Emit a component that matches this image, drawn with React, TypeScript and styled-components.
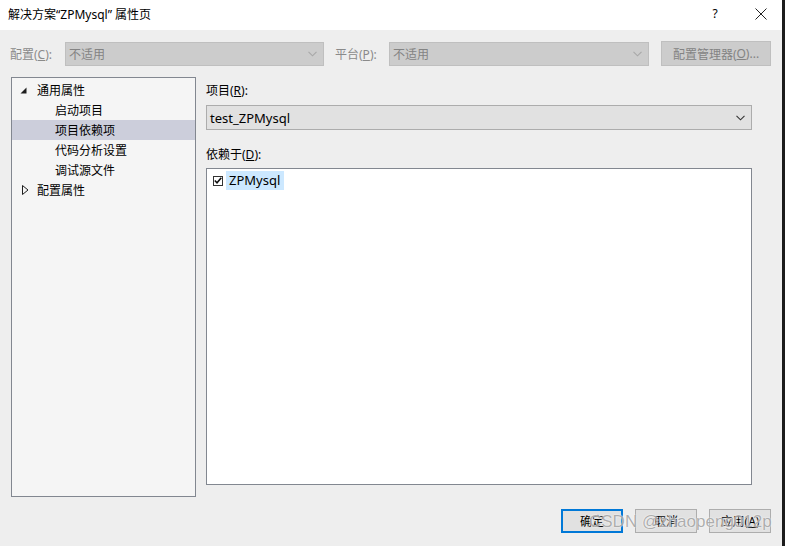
import React from "react";
import styled, { createGlobalStyle } from "styled-components";

const GlobalStyle = createGlobalStyle`
  html, body {
    margin: 0;
    padding: 0;
    background: #eeeeee;
  }
  body {
    font-family: "Noto Sans", "Noto Sans CJK SC", sans-serif;
    font-size: 12px;
    color: #000;
  }
`;

const Window = styled.div`
  position: relative;
  width: 782px;
  height: 546px;
  border-right: 3px solid #1c1c1c;
  display: flex;
  flex-direction: column;
  background: #eeeeee;
  overflow: hidden;
`;

const TitleBar = styled.div`
  height: 30px;
  background: #ffffff;
  display: flex;
  align-items: center;
  padding-left: 8px;
  font-size: 12px;
`;

const TitleText = styled.div`
  flex: 1;
  margin-top: -3px;
`;

const TitleButton = styled.div<{ $w: number; $mr?: number }>`
  width: ${(p) => p.$w}px;
  margin-right: ${(p) => p.$mr ?? 0}px;
  height: 30px;
  display: flex;
  align-items: center;
  justify-content: center;
  margin-top: -3px;
`;

const ConfigRow = styled.div`
  display: flex;
  align-items: center;
  height: 25px;
  margin-top: 11px;
  padding-left: 10px;
`;

const DisabledLabel = styled.span<{ $w: number }>`
  width: ${(p) => p.$w}px;
  color: #8a8a8a;
  font-size: 12px;
`;

const DisabledCombo = styled.div<{ $w: number; $mr: number }>`
  box-sizing: border-box;
  width: ${(p) => p.$w}px;
  margin-right: ${(p) => p.$mr}px;
  height: 24px;
  background: #cccccc;
  border: 1px solid #bfbfbf;
  display: flex;
  align-items: center;
  padding: 0 6px 0 3px;
  color: #838383;
  justify-content: space-between;
`;

const DisabledButton = styled.div`
  box-sizing: border-box;
  width: 110px;
  height: 25px;
  background: #cccccc;
  border: 1px solid #bfbfbf;
  color: #838383;
  display: flex;
  align-items: center;
  justify-content: center;
`;

const Main = styled.div`
  display: flex;
  margin-top: 11px;
  padding-left: 11px;
  gap: 10px;
`;

const TreePanel = styled.div`
  box-sizing: border-box;
  width: 185px;
  height: 420px;
  background: #f5f5f5;
  border: 1px solid #828790;
  padding-top: 2px;
`;

const TreeRow = styled.div<{ $level: number; $selected?: boolean }>`
  height: 20px;
  display: flex;
  align-items: center;
  padding-left: ${(p) => (p.$level === 0 ? 8 : 43)}px;
  background: ${(p) => (p.$selected ? "#cccedb" : "transparent")};
`;

const Expander = styled.span`
  width: 16px;
  display: flex;
  align-items: center;
  margin-right: 1px;
`;

const RightColumn = styled.div`
  width: 546px;
  display: flex;
  flex-direction: column;
`;

const FieldLabel = styled.div<{ $mt: number }>`
  margin-top: ${(p) => p.$mt}px;
  height: 16px;
  line-height: 16px;
`;

const Combo = styled.div`
  box-sizing: border-box;
  height: 25px;
  margin-top: 6px;
  background: #e1e1e1;
  border: 1px solid #acacac;
  display: flex;
  align-items: center;
  justify-content: space-between;
  padding: 0 6px 0 3px;
`;

const ComboValue = styled.span`
  font-size: 13px;
`;

const ListBox = styled.div`
  box-sizing: border-box;
  margin-top: 5px;
  height: 317px;
  background: #ffffff;
  border: 1px solid #828790;
  padding: 2px 0 0 6px;
`;

const ListItem = styled.div`
  display: flex;
  align-items: center;
  height: 19px;
`;

const CheckBox = styled.span`
  box-sizing: border-box;
  width: 10px;
  height: 10px;
  border: 1px solid #333333;
  background: #fff;
  display: flex;
  align-items: center;
  justify-content: center;
  margin-right: 3px;
`;

const ItemText = styled.span`
  background: #cce8ff;
  height: 19px;
  line-height: 19px;
  padding: 0 4px 0 3px;
  font-size: 13px;
`;

const Footer = styled.div`
  display: flex;
  justify-content: flex-end;
  gap: 12px;
  padding-right: 11px;
  margin-top: 12px;
`;

const DialogButton = styled.div<{ $default?: boolean }>`
  box-sizing: border-box;
  width: 62px;
  height: 24px;
  background: #e1e1e1;
  border: ${(p) => (p.$default ? "2px solid #0078d7" : "1px solid #adadad")};
  display: flex;
  align-items: center;
  justify-content: center;
`;

const Watermark = styled.div`
  position: absolute;
  left: 589px;
  top: 512px;
  font-family: "Liberation Sans", sans-serif;
  font-size: 17px;
  color: rgba(120, 120, 120, 0.6);
  text-shadow: 0 0 1px rgba(255, 255, 255, 0.9), 0 0 2px rgba(255, 255, 255, 0.7);
  pointer-events: none;
  white-space: nowrap;
`;

const Chevron = ({ color }: { color: string }) => (
  <svg width="9" height="6" viewBox="0 0 9 6">
    <path d="M0.5 0.8 L4.5 4.8 L8.5 0.8" fill="none" stroke={color} strokeWidth="1.1" />
  </svg>
);

const treeItems = [
  { label: "通用属性", level: 0, expander: "open" },
  { label: "启动项目", level: 1 },
  { label: "项目依赖项", level: 1, selected: true },
  { label: "代码分析设置", level: 1 },
  { label: "调试源文件", level: 1 },
  { label: "配置属性", level: 0, expander: "closed" },
];

function App() {
  return (
    <Window>
      <GlobalStyle />
      <TitleBar>
        <TitleText>解决方案“ZPMysql” 属性页</TitleText>
        <TitleButton $w={36} $mr={7}>?</TitleButton>
        <TitleButton $w={42}>
          <svg width="12" height="12" viewBox="0 0 12 12">
            <path d="M0.5 0.5 L11.5 11.5 M11.5 0.5 L0.5 11.5" stroke="#222" strokeWidth="1" />
          </svg>
        </TitleButton>
      </TitleBar>

      <ConfigRow>
        <DisabledLabel $w={55}>
          配置(<u>C</u>):
        </DisabledLabel>
        <DisabledCombo $w={259} $mr={11}>
          <span>不适用</span>
          <Chevron color="#a8a8a8" />
        </DisabledCombo>
        <DisabledLabel $w={54}>
          平台(<u>P</u>):
        </DisabledLabel>
        <DisabledCombo $w={260} $mr={12}>
          <span>不适用</span>
          <Chevron color="#a8a8a8" />
        </DisabledCombo>
        <DisabledButton>
          配置管理器(<u>O</u>)...
        </DisabledButton>
      </ConfigRow>

      <Main>
        <TreePanel>
          {treeItems.map((item) => (
            <TreeRow key={item.label} $level={item.level} $selected={item.selected}>
              {item.level === 0 && (
                <Expander>
                  {item.expander === "open" ? (
                    <svg width="7" height="7" viewBox="0 0 7 7">
                      <path d="M6.5 0.5 L6.5 6.5 L0.5 6.5 Z" fill="#1e1e1e" />
                    </svg>
                  ) : (
                    <svg width="9" height="10" viewBox="0 0 9 10">
                      <path d="M2.5 0.5 L8 5 L2.5 9.5 Z" fill="none" stroke="#1e1e1e" strokeWidth="1" />
                    </svg>
                  )}
                </Expander>
              )}
              <span>{item.label}</span>
            </TreeRow>
          ))}
        </TreePanel>

        <RightColumn>
          <FieldLabel $mt={6}>
            项目(<u>R</u>):
          </FieldLabel>
          <Combo>
            <ComboValue>test_ZPMysql</ComboValue>
            <Chevron color="#333" />
          </Combo>
          <FieldLabel $mt={17}>
            依赖于(<u>D</u>):
          </FieldLabel>
          <ListBox>
            <ListItem>
              <CheckBox>
                <svg width="8" height="7" viewBox="0 0 8 7">
                  <path d="M0.8 3.5 L3 5.8 L7.3 0.8" fill="none" stroke="#111" strokeWidth="1.6" />
                </svg>
              </CheckBox>
              <ItemText>ZPMysql</ItemText>
            </ListItem>
          </ListBox>
        </RightColumn>
      </Main>

      <Footer>
        <DialogButton $default>确定</DialogButton>
        <DialogButton>取消</DialogButton>
        <DialogButton>
          应用(<u>A</u>)
        </DialogButton>
      </Footer>

      <Watermark>CSDN @zhaopeng012p</Watermark>
    </Window>
  );
}

export default App;
